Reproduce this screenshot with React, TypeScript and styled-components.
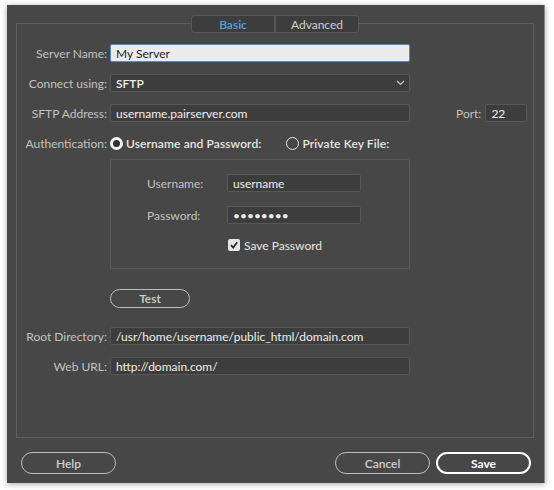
import styled, { createGlobalStyle } from "styled-components";

const GlobalStyle = createGlobalStyle`
  html, body {
    margin: 0;
    padding: 0;
    background: #ffffff;
  }
  * {
    box-sizing: border-box;
  }
`;

const Page = styled.div`
  width: 554px;
  height: 490px;
  padding: 5px 0 0 7px;
  font-family: Lato, "Liberation Sans", sans-serif;
  font-size: 12px;
`;

const Dialog = styled.div`
  width: 538px;
  height: 478px;
  background: #474747;
  box-shadow: 0 1px 6px rgba(0, 0, 0, 0.35);
  border-right: 1px solid #8a8a8a;
  padding: 18px 10px 0 9px;
  display: flex;
  flex-direction: column;
`;

const FieldBox = styled.div`
  height: 415px;
  border: 1px solid #5e5e5e;
  display: flex;
  flex-direction: column;
`;

const TabBar = styled.div`
  display: flex;
  justify-content: center;
  margin-top: -9px;
`;

const Tab = styled.div<{ $active?: boolean }>`
  width: 84px;
  height: 18px;
  display: flex;
  align-items: center;
  justify-content: center;
  background: #3d3d3d;
  border: 1px solid #575757;
  border-radius: ${(p) => (p.$active ? "3px 0 0 3px" : "0 3px 3px 0")};
  color: ${(p) => (p.$active ? "#4ea6e6" : "#cfcfcf")};
  font-weight: ${(p) => (p.$active ? 600 : 400)};
`;

const Form = styled.div`
  display: flex;
  flex-direction: column;
  padding-top: 11px;
`;

const Row = styled.div<{ $mt?: number }>`
  display: flex;
  align-items: center;
  height: 18px;
  margin-top: ${(p) => p.$mt ?? 0}px;
`;

const Label = styled.div`
  width: 90px;
  text-align: right;
  color: #c2c2c2;
  margin-right: 3px;
  white-space: nowrap;
`;

const Field = styled.div<{ $w?: number; $light?: boolean }>`
  width: ${(p) => p.$w ?? 300}px;
  height: 18px;
  display: flex;
  align-items: center;
  padding: 0 5px;
  border-radius: 2px;
  background: ${(p) => (p.$light ? "#ececec" : "#3d3d3d")};
  border: ${(p) => (p.$light ? "1.5px solid #4b8fdc" : "1px solid #575757")};
  color: ${(p) => (p.$light ? "#1e1e1e" : "#eeeeee")};
  white-space: nowrap;
  overflow: hidden;
`;

const SelectField = styled(Field)`
  justify-content: space-between;
  padding-right: 4px;
  font-weight: 600;
`;

const PortLabel = styled.div`
  margin-left: 46px;
  margin-right: 4px;
  color: #c2c2c2;
`;

const RadioGroup = styled.div<{ $ml?: number }>`
  display: flex;
  align-items: center;
  margin-left: ${(p) => p.$ml ?? 0}px;
  color: #e6e6e6;
  font-weight: 600;
  letter-spacing: 0.1px;
`;

const Radio = styled.span<{ $on?: boolean }>`
  width: 13px;
  height: 13px;
  border-radius: 50%;
  border: ${(p) => (p.$on ? "3px solid #f4f4f4" : "1px solid #e8e8e8")};
  background: ${(p) => (p.$on ? "#2f2f2f" : "transparent")};
  margin-right: 3px;
  flex: none;
`;

const Inset = styled.div`
  width: 300px;
  height: 110px;
  margin-left: 93px;
  margin-top: 7px;
  border: 1px solid #5a5a5a;
  border-radius: 2px;
  padding: 14px 0 0 36px;
  display: flex;
  flex-direction: column;
`;

const InsetLabel = styled.div`
  width: 80px;
  color: #c2c2c2;
`;

const CheckRow = styled.div`
  display: flex;
  align-items: center;
  height: 14px;
  margin: 14px 0 0 81px;
  color: #e6e6e6;
`;

const CheckBox = styled.span`
  width: 12px;
  height: 12px;
  border-radius: 2px;
  background: #e4e4e4;
  display: flex;
  align-items: center;
  justify-content: center;
  margin-right: 4px;
`;

const PillButton = styled.div<{ $w?: number; $primary?: boolean }>`
  width: ${(p) => p.$w ?? 95}px;
  height: 22px;
  border-radius: 11px;
  border: ${(p) => (p.$primary ? "2px solid #ffffff" : "1px solid #bdbdbd")};
  color: ${(p) => (p.$primary ? "#ffffff" : "#cfcfcf")};
  font-weight: ${(p) => (p.$primary ? 700 : 600)};
  display: flex;
  align-items: center;
  justify-content: center;
`;

const TestButton = styled(PillButton)`
  height: 19px;
  margin: 20px 0 0 93px;
`;

const Footer = styled.div`
  display: flex;
  align-items: center;
  gap: 6px;
  padding: 14px 3px 0 5px;
`;

const Spacer = styled.div`
  flex: 1;
`;

const Chevron = () => (
  <svg width="9" height="6" viewBox="0 0 9 6">
    <path d="M1 1 L4.5 4.5 L8 1" fill="none" stroke="#c8c8c8" strokeWidth="1.2" />
  </svg>
);

const Check = () => (
  <svg width="10" height="10" viewBox="0 0 10 10">
    <path d="M2 5.2 L4.2 7.5 L8.2 2.3" fill="none" stroke="#2a2a2a" strokeWidth="1.8" />
  </svg>
);

function App() {
  return (
    <Page>
      <GlobalStyle />
      <Dialog>
        <FieldBox>
          <TabBar>
            <Tab $active>Basic</Tab>
            <Tab>Advanced</Tab>
          </TabBar>
          <Form>
            <Row>
              <Label>Server Name:</Label>
              <Field $light>My Server</Field>
            </Row>
            <Row $mt={12}>
              <Label>Connect using:</Label>
              <SelectField>
                <span>SFTP</span>
                <Chevron />
              </SelectField>
            </Row>
            <Row $mt={12}>
              <Label>SFTP Address:</Label>
              <Field>username.pairserver.com</Field>
              <PortLabel>Port:</PortLabel>
              <Field $w={42}>22</Field>
            </Row>
            <Row $mt={12}>
              <Label>Authentication:</Label>
              <RadioGroup>
                <Radio $on />
                Username and Password:
              </RadioGroup>
              <RadioGroup $ml={25}>
                <Radio />
                Private Key File:
              </RadioGroup>
            </Row>
            <Inset>
              <Row>
                <InsetLabel>Username:</InsetLabel>
                <Field $w={134}>username</Field>
              </Row>
              <Row $mt={14}>
                <InsetLabel>Password:</InsetLabel>
                <Field $w={134}>••••••••</Field>
              </Row>
              <CheckRow>
                <CheckBox>
                  <Check />
                </CheckBox>
                Save Password
              </CheckRow>
            </Inset>
            <TestButton $w={80}>Test</TestButton>
            <Row $mt={19}>
              <Label>Root Directory:</Label>
              <Field>/usr/home/username/public_html/domain.com</Field>
            </Row>
            <Row $mt={12}>
              <Label>Web URL:</Label>
              <Field>http://domain.com/</Field>
            </Row>
          </Form>
        </FieldBox>
        <Footer>
          <PillButton>Help</PillButton>
          <Spacer />
          <PillButton>Cancel</PillButton>
          <PillButton $primary>Save</PillButton>
        </Footer>
      </Dialog>
    </Page>
  );
}

export default App;
